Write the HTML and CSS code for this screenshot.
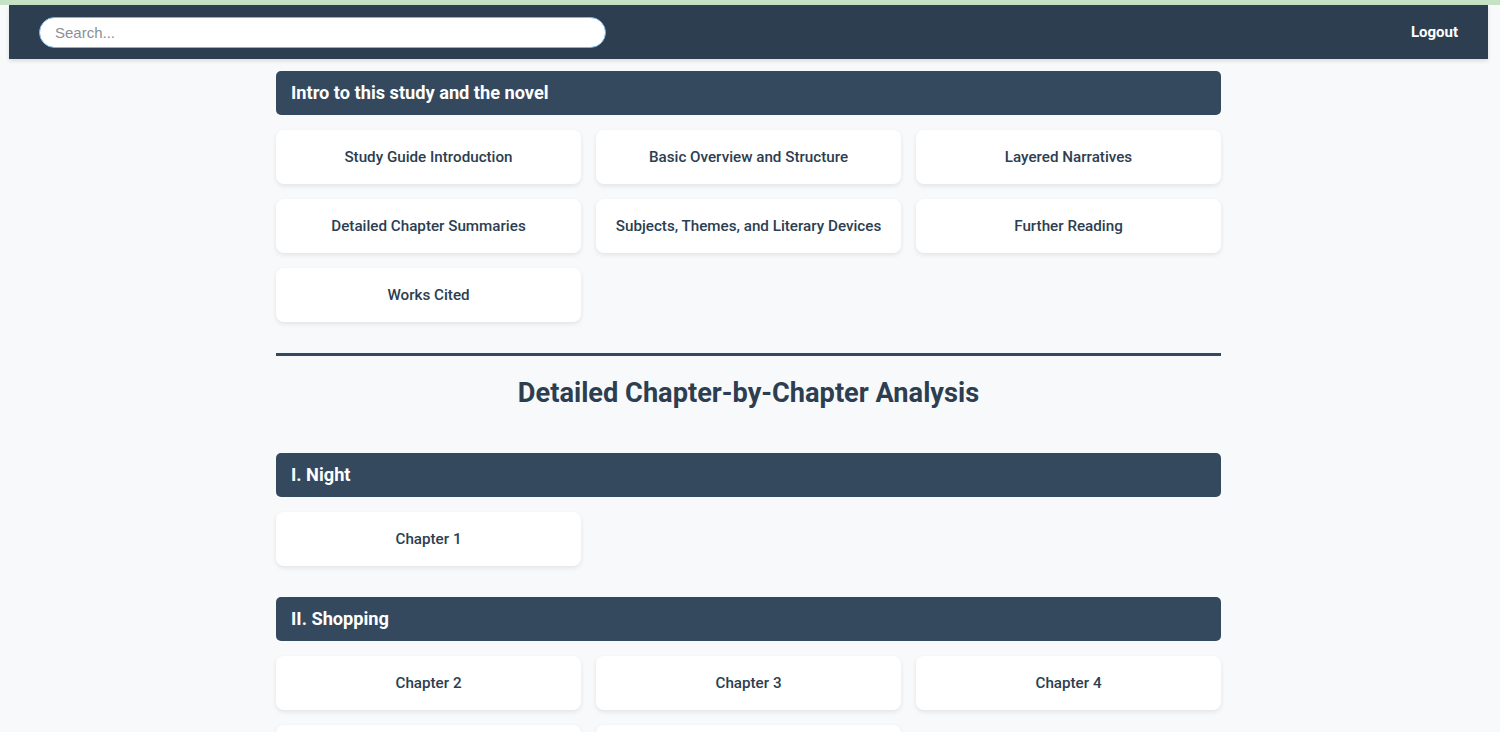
FILE: index.html
```html
<!DOCTYPE html>
<html lang="en">
<head>
<meta charset="utf-8">
<title>Study Guide</title>
<link rel="stylesheet" href="styles.css">
</head>
<body>
<div class="topstrip"></div>
<div class="page">
  <header class="navbar">
    <input class="search" type="text" placeholder="Search...">
    <a class="logout" href="#">Logout</a>
  </header>
  <main class="content">
    <section class="group">
      <h2 class="group-title">Intro to this study and the novel</h2>
      <div class="grid">
        <a class="card" href="#">Study Guide Introduction</a>
        <a class="card" href="#">Basic Overview and Structure</a>
        <a class="card" href="#">Layered Narratives</a>
        <a class="card" href="#">Detailed Chapter Summaries</a>
        <a class="card" href="#">Subjects, Themes, and Literary Devices</a>
        <a class="card" href="#">Further Reading</a>
        <a class="card" href="#">Works Cited</a>
      </div>
    </section>
    <hr class="divider">
    <h1 class="analysis-title">Detailed Chapter-by-Chapter Analysis</h1>
    <section class="group">
      <h2 class="group-title">I. Night</h2>
      <div class="grid">
        <a class="card" href="#">Chapter 1</a>
      </div>
    </section>
    <section class="group">
      <h2 class="group-title">II. Shopping</h2>
      <div class="grid">
        <a class="card" href="#">Chapter 2</a>
        <a class="card" href="#">Chapter 3</a>
        <a class="card" href="#">Chapter 4</a>
        <a class="card" href="#">Chapter 5</a>
        <a class="card" href="#">Chapter 6</a>
      </div>
    </section>
  </main>
</div>
</body>
</html>
```
FILE: styles.css
```css
* { box-sizing: border-box; }
html, body { margin: 0; padding: 0; }
body {
  background: #f7f9fb;
  font-family: Roboto, "Liberation Sans", Arial, sans-serif;
  color: #2c3e50;
}
.topstrip {
  height: 5px;
  background: #c6e2c5;
}
.page {
  margin-left: 9px;
  width: 1479px;
}
.navbar {
  height: 54px;
  background: #2c3e50;
  display: flex;
  align-items: center;
  justify-content: space-between;
  padding: 0 30px;
  box-shadow: 0 2px 4px rgba(0,0,0,0.12);
}
.search {
  width: 567px;
  height: 31px;
  border-radius: 16px;
  border: 1px solid #7fb3e0;
  background: #fff;
  padding: 0 15px;
  font-family: "Liberation Sans", Arial, sans-serif;
  font-size: 15px;
  color: #333;
  outline: none;
  margin-top: 1px;
}
.search::placeholder { color: #8a8f95; }
.logout {
  color: #fff;
  font-weight: 700;
  font-size: 15px;
  text-decoration: none;
}
.content {
  width: 945px;
  margin: 12px auto 0;
}
.group { margin-bottom: 31px; }
.group-title {
  margin: 0 0 15px;
  height: 44px;
  display: flex;
  align-items: center;
  padding: 0 15px 1px;
  background: #34495e;
  color: #fff;
  border-radius: 5px;
  font-size: 18.2px;
  font-weight: 700;
}
.grid {
  display: grid;
  grid-template-columns: repeat(3, 1fr);
  gap: 15px;
}
.card {
  height: 54px;
  background: #fff;
  border-radius: 8px;
  box-shadow: 0 2px 5px rgba(0,0,0,0.09);
  display: flex;
  align-items: center;
  justify-content: center;
  color: #2c3e50;
  text-decoration: none;
  font-size: 15.2px;
  font-weight: 500;
}
.divider {
  border: 0;
  height: 3px;
  background: #34495e;
  margin: 30px 0 0;
}
.analysis-title {
  margin: 19px 0 42px;
  text-align: center;
  font-size: 27.2px;
  font-weight: 700;
  color: #2c3e50;
  line-height: 36px;
}
```
